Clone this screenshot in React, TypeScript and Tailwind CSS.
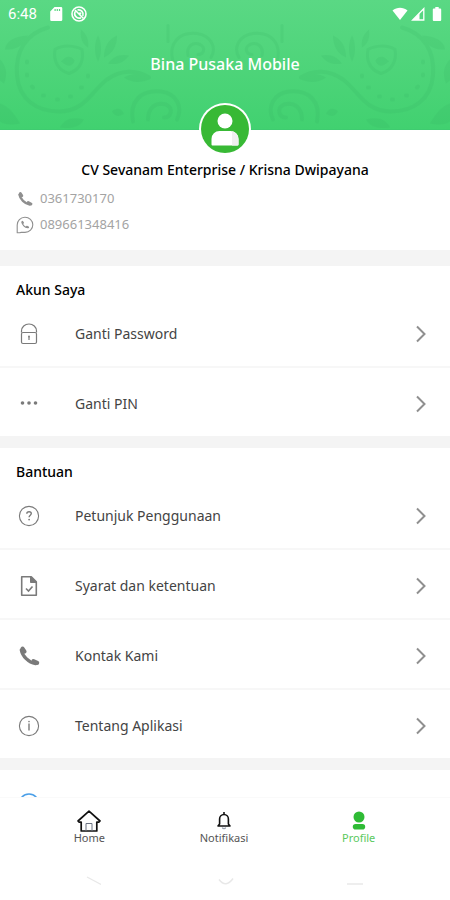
import type { ReactNode } from "react";

type IconProps = {
  className?: string;
};

type MenuItem = {
  label: string;
  icon: ReactNode;
};

type Tab = {
  label: string;
  icon: ReactNode;
  active?: boolean;
};

function Handset() {
  return (
    <g fill="none" stroke="currentColor" strokeLinecap="round">
      <path d="M3 4.5C4 10 9.500 16 16 17" strokeWidth="3" />
      <path d="M4.200 3.200 6 6M14 14.500l3.500 1.700" strokeWidth="3.600" />
    </g>
  );
}

function PhoneIcon({ className }: IconProps) {
  return (
    <svg viewBox="0 0 20 20" className={className}>
      <Handset />
    </svg>
  );
}

function WhatsAppIcon({ className }: IconProps) {
  return (
    <svg viewBox="0 0 18 18" className={className} fill="none">
      <path
        d="M1.2 16.8V9A7.8 7.6 0 1 1 9 16.4H5.2l-1.5.4Z"
        stroke="currentColor"
        strokeWidth="1.1"
        strokeLinejoin="round"
      />
      <g transform="translate(4.6 4.2) scale(.44)">
        <Handset />
      </g>
    </svg>
  );
}

function LockIcon({ className }: IconProps) {
  return (
    <svg
      viewBox="0 0 22 22"
      className={className}
      fill="none"
      stroke="currentColor"
      strokeWidth="1.2"
    >
      <path d="M3.5 9.5V8a7.5 7 0 0 1 15 0v1.5" />
      <rect x="3.5" y="9.5" width="15" height="11" rx="1.5" />
      <circle cx="11" cy="13.5" r=".9" fill="currentColor" stroke="none" />
      <path d="M11 13.5V17" />
    </svg>
  );
}

function DotsIcon({ className }: IconProps) {
  return (
    <svg viewBox="0 0 22 22" className={className} fill="currentColor">
      <circle cx="4.5" cy="10" r="1.8" />
      <circle cx="11" cy="10" r="1.8" />
      <circle cx="17.5" cy="10" r="1.8" />
    </svg>
  );
}

function HelpIcon({ className }: IconProps) {
  return (
    <svg
      viewBox="0 0 22 22"
      className={className}
      fill="none"
      stroke="currentColor"
    >
      <circle cx="11" cy="11" r="9.6" strokeWidth="1.1" />
      <path
        d="M8.8 8.8c0-1.400 1-2.100 2.300-2.100s2.200.7 2.200 1.900c0 1.600-2.200 1.600-2.200 3.600"
        strokeWidth="1.4"
      />
      <circle cx="11.1" cy="14.6" r=".9" fill="currentColor" stroke="none" />
    </svg>
  );
}

function DocumentIcon({ className }: IconProps) {
  return (
    <svg
      viewBox="0 0 22 22"
      className={className}
      fill="none"
      stroke="currentColor"
      strokeWidth="1.6"
    >
      <path d="M3.7 1.700h9.600l5 5v13.600H3.700Z" strokeLinejoin="round" />
      <path d="M12.500 1.500v6h6Z" fill="currentColor" strokeWidth="1" />
      <path d="m8 13.500 2.500 2.500 4-4.500" />
    </svg>
  );
}

function InfoIcon({ className }: IconProps) {
  return (
    <svg
      viewBox="0 0 22 22"
      className={className}
      fill="none"
      stroke="currentColor"
    >
      <circle cx="11" cy="11" r="9.6" strokeWidth="1.1" />
      <path d="M11 8.500v7" strokeWidth="1.4" />
      <circle cx="11" cy="6.600" r=".8" fill="currentColor" stroke="none" />
    </svg>
  );
}

function ChevronIcon({ className }: IconProps) {
  return (
    <svg
      viewBox="0 0 12 18"
      className={className}
      fill="none"
      stroke="currentColor"
      strokeWidth="2"
    >
      <path d="m2 1.5 7.5 7.5L2 16.5" />
    </svg>
  );
}

function HomeIcon({ className }: IconProps) {
  return (
    <svg
      viewBox="0 0 24 22"
      className={className}
      fill="none"
      stroke="currentColor"
      strokeWidth="1.7"
      strokeLinejoin="round"
    >
      <path d="M12 1.200 23 11l-1.200 1.200h-2V21H4.200v-8.800h-2L1 11Z" />
      <path d="M9 21v-7.500h6V21" strokeWidth="1" className="text-gray-500" />
    </svg>
  );
}

function BellIcon({ className }: IconProps) {
  return (
    <svg
      viewBox="0 0 24 22"
      className={className}
      fill="none"
      stroke="currentColor"
      strokeWidth="1.6"
      strokeLinejoin="round"
    >
      <path d="M12 2v2.500M6 16l1.600-2V9a4.400 4.500 0 0 1 8.800 0v5l1.600 2Z" />
      <path
        d="M10.300 17.500a1.800 1.800 0 0 0 3.400 0"
        strokeWidth="1.2"
        className="text-gray-400"
      />
    </svg>
  );
}

function ProfileIcon({ className }: IconProps) {
  return (
    <svg viewBox="0 0 24 22" className={className} fill="currentColor">
      <circle cx="12" cy="7" r="5.500" />
      <rect x="5.800" y="14" width="12.400" height="5.600" rx="2.800" />
    </svg>
  );
}

// Half of the batik ornament, the header draws it twice
function Paisley() {
  return (
    <g fill="none" stroke="#34b062" strokeLinecap="round">
      <path
        d="M48 28C26 34 15 52 17 76c2 24 20 36 42 36 26 0 32-20 48-32 14-10 30-10 42-2"
        strokeWidth="4"
      />
      <path
        d="M55 50c8-5 20-4 27 0 2 10-1 20-13 24-11-3-16-13-14-24Z"
        strokeWidth="3"
      />
      <path d="M62 62c4-6 10-5 12-1-1 5-6 7-12 1Z" fill="#34b062" />
      <path
        d="M27 62v1M27 75v1M32 87l1 1M43 96h1M57 100h1M70 97h1M81 88h1M88 76v1"
        strokeWidth="4"
      />
      <path
        d="M133 122c-4-20 8-32 28-30 16 2 22 16 16 28M148 120c0-12 8-18 18-15 8 4 5 13-2 13"
        strokeWidth="4"
      />
      <path
        d="M173 62c-5-18 6-30 24-28 14 2 20 14 14 24M188 56c-2-9 5-14 12-11 6 3 4 10-2 10"
        strokeWidth="3"
      />
      <path d="M168 42V26" strokeWidth="3" />
      <g fill="#34b062" stroke="none">
        <path d="M98 62c-4-8-4-18 0-26 4 8 4 18 0 26Z" />
        <path d="M104 58c0-10 4-18 13-22 0 10-4 18-13 22Z" />
        <path d="M108 64c5-7 12-10 21-8-5 7-12 10-21 8Z" />
        <path d="M88 48c-6-4-8-10-7-18 6 5 8 11 7 18Z" />
        <path d="M5 50c1-9 10-13 23-14-4 9-11 15-23 14Z" />
        <path d="M0 104c8 3 14 9 20 20-10 2-16 1-20-2Z" />
        <path d="M60 128c4-8 12-11 24-8-4 7-12 10-24 8Z" />
        <path d="M0 60c6 6 8 14 4 24l-4-3Z" />
        <path d="M112 112c4-4 9-4 12 2-5 4-9 3-12-2Z" />
        <path d="M124 78c8-5 18-5 25 2-9 4-18 3-25-2Z" />
      </g>
    </g>
  );
}

function StatusBar() {
  return (
    <div className="relative flex h-6 items-end justify-between px-2 text-white">
      <div className="flex h-5 items-center gap-3">
        <span className="font-[Roboto] text-[15px] leading-5">6:48</span>
        <div className="flex items-center gap-2">
          <svg viewBox="0 0 14 16" className="h-4 w-3.5" fill="currentColor">
            <path
              fillRule="evenodd"
              d="M5.500 1H12a1.300 1.300 0 0 1 1.300 1.300v11.400A1.300 1.300 0 0 1 12 15H2.500a1.300 1.300 0 0 1-1.300-1.300V5.500Zm0 2v2h1.200V3Zm2.200 0v2h1.200V3Zm2.200 0v2h1.200V3Z"
            />
          </svg>
          <svg
            viewBox="0 0 16 16"
            className="size-4"
            fill="none"
            stroke="currentColor"
            strokeWidth="1.6"
          >
            <circle cx="8" cy="8" r="7" />
            <path d="M4.200 5.500a4.500 4.500 0 0 0 5.800 6.200M6.500 4a4.500 4.500 0 0 1 5.300 6M4 4l8.500 8.500M8.500 6.500l1.500 1.500" />
          </svg>
        </div>
      </div>
      <div className="flex h-5 items-center gap-[3px]">
        <svg viewBox="0 0 16 14" className="h-3.5 w-4" fill="currentColor">
          <path d="M.5 3.500C5-.3 11-.3 15.500 3.500L8 13Z" />
        </svg>
        <svg viewBox="0 0 14 14" className="size-3.5" fill="none">
          <path
            d="M12.800 1.700V13H1.600Z"
            stroke="currentColor"
            strokeWidth="1.3"
          />
          <path d="M8.500 6v7H1.600Z" fill="currentColor" />
        </svg>
        <svg viewBox="0 0 10 14" className="ml-1 h-3.5 w-2.5" fill="currentColor">
          <path d="M3.300 0h3.400v1.500h1.500a1 1 0 0 1 1 1V13a1 1 0 0 1-1 1H1.800a1 1 0 0 1-1-1V2.500a1 1 0 0 1 1-1h1.500Z" />
        </svg>
      </div>
    </div>
  );
}

function Header() {
  return (
    <header className="relative h-[130px] shrink-0 border-b border-[#3fcb70] bg-linear-to-b from-[#5ad884] to-[#41d170]">
      <svg
        viewBox="0 0 450 130"
        preserveAspectRatio="xMidYMid slice"
        className="absolute inset-0 size-full opacity-15"
      >
        <Paisley />
        <g transform="translate(450) scale(-1 1)">
          <Paisley />
        </g>
      </svg>
      <StatusBar />
      <h1 className="relative pt-7 text-center text-base leading-6 font-medium text-white">
        Bina Pusaka Mobile
      </h1>
      <div className="absolute inset-x-0 top-[103px] flex justify-center">
        <svg viewBox="0 0 52 52" className="size-[52px]">
          <circle cx="26" cy="26" r="26" fill="#fff" />
          <circle cx="26" cy="26" r="24" fill="#38b935" />
          <circle cx="26" cy="18" r="7.500" fill="#fff" />
          <path
            d="M12.500 41.500V36a8 8 0 0 1 8-8h11a8 8 0 0 1 8 8v5.500q0 1-1 1h-25q-1 0-1-1Z"
            fill="#fff"
          />
          <path
            d="M33 28.200a8 8 0 0 1 6.500 7.800v5.500q0 1-1 1H33Z"
            fill="#efefef"
          />
        </svg>
      </div>
    </header>
  );
}

function Section({ title, items }: { title: string; items: MenuItem[] }) {
  return (
    <section className="bg-white pt-4">
      <h2 className="px-4 text-sm leading-4 font-medium text-black">{title}</h2>
      <ul className="divide-y-2 divide-[#f7f7f7]">
        {items.map((item) => (
          <li key={item.label}>
            <button className="flex h-17 w-full items-center pt-1 pr-[23px] pl-[18px] text-left text-sm text-[#444]">
              <span className="w-[57px] text-[#7a7a7a]">{item.icon}</span>
              <span className="flex-1">{item.label}</span>
              <ChevronIcon className="h-[18px] w-3 text-[#8f8f8f]" />
            </button>
          </li>
        ))}
      </ul>
    </section>
  );
}

function TabBar({ tabs }: { tabs: Tab[] }) {
  return (
    <nav className="h-[103px] shrink-0 border-t border-[#fafafa] bg-white pr-6 pl-[22px]">
      <div className="flex pt-3">
        {tabs.map((tab) => (
          <button
            key={tab.label}
            className={
              tab.active
                ? "flex flex-1 flex-col items-center text-[#2fbb35]"
                : "flex flex-1 flex-col items-center text-[#111]"
            }
          >
            {tab.icon}
            <span
              className={
                tab.active
                  ? "text-[11px] leading-3 text-[#5ac95e]"
                  : "text-[11px] leading-3 text-[#555]"
              }
            >
              {tab.label}
            </span>
          </button>
        ))}
      </div>
      {/* faint system navigation */}
      <div className="flex pt-8 text-[#e8e8e8]">
        <div className="flex flex-1 justify-center">
          <svg viewBox="0 0 24 10" className="h-2.5 w-6" fill="none">
            <path d="m10 1 14 7.500" stroke="currentColor" strokeWidth="1.2" />
          </svg>
        </div>
        <div className="flex flex-1 justify-center">
          <svg viewBox="0 0 24 10" className="h-2.5 w-6" fill="none">
            <path d="M7 3.500q7 9 14-1" stroke="currentColor" strokeWidth="1.500" />
          </svg>
        </div>
        <div className="flex flex-1 justify-center">
          <svg viewBox="0 0 24 10" className="h-2.5 w-6" fill="none">
            <path d="M0 8h16" stroke="currentColor" strokeWidth="1.500" />
          </svg>
        </div>
      </div>
    </nav>
  );
}

const accountItems: MenuItem[] = [
  { label: "Ganti Password", icon: <LockIcon className="size-[22px]" /> },
  { label: "Ganti PIN", icon: <DotsIcon className="size-[22px]" /> },
];

const helpItems: MenuItem[] = [
  { label: "Petunjuk Penggunaan", icon: <HelpIcon className="size-[22px]" /> },
  { label: "Syarat dan ketentuan", icon: <DocumentIcon className="size-[22px]" /> },
  { label: "Kontak Kami", icon: <PhoneIcon className="size-[22px]" /> },
  { label: "Tentang Aplikasi", icon: <InfoIcon className="size-[22px]" /> },
];

const tabs: Tab[] = [
  { label: "Home", icon: <HomeIcon className="h-[22px] w-6" /> },
  { label: "Notifikasi", icon: <BellIcon className="h-[22px] w-6" /> },
  { label: "Profile", icon: <ProfileIcon className="h-[22px] w-6" />, active: true },
];

export default function App() {
  return (
    <div className="flex h-screen flex-col bg-white font-['Noto_Sans',sans-serif]">
      <main className="min-h-0 flex-1 overflow-y-auto bg-[#f4f4f4] [scrollbar-width:none]">
        <Header />
        <section className="bg-white px-4 pt-7 pb-3">
          <p className="pt-1 text-center text-sm leading-4 font-medium text-black">
            CV Sevanam Enterprise / Krisna Dwipayana
          </p>
          <div className="flex flex-col pt-2 text-[13px] text-[#a3a3a3]">
            <a href="tel:0361730170" className="flex h-[26px] items-center gap-1.5">
              <PhoneIcon className="size-[18px] p-px text-[#8f8f8f]" />
              0361730170
            </a>
            <a href="tel:089661348416" className="flex h-[26px] items-center gap-1.5">
              <WhatsAppIcon className="size-[18px] text-[#8f8f8f]" />
              089661348416
            </a>
          </div>
        </section>
        <div className="mt-4 flex flex-col gap-3">
          <Section title="Akun Saya" items={accountItems} />
          <Section title="Bantuan" items={helpItems} />
          <div className="flex h-17 items-center bg-white pl-[18px]">
            <svg viewBox="0 0 22 22" className="size-[22px]" fill="none">
              <circle cx="11" cy="11" r="10" stroke="#4a9fe8" strokeWidth="1.5" />
            </svg>
          </div>
        </div>
      </main>
      <TabBar tabs={tabs} />
    </div>
  );
}
